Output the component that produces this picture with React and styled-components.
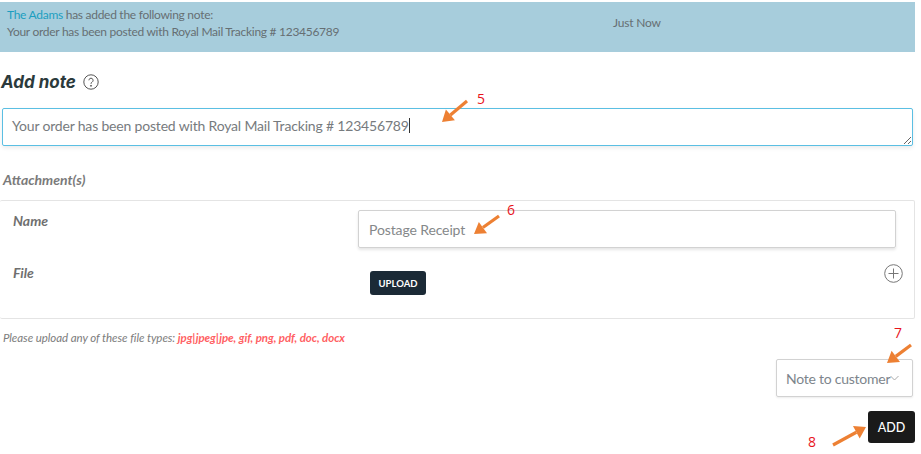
import React from "react";
import styled, { createGlobalStyle } from "styled-components";

const Global = createGlobalStyle`
  html, body { margin: 0; padding: 0; background: #fff; }
  body { font-family: Lato, "Liberation Sans", sans-serif; color: #6b6f72; }
`;

const Page = styled.div`
  position: relative;
  width: 921px;
  height: 454px;
  overflow: hidden;
  padding-top: 2px;
  box-sizing: border-box;
`;

const Banner = styled.div`
  width: 915px;
  height: 50px;
  box-sizing: border-box;
  background: #a7cddc;
  padding: 4px 7px 0;
  display: grid;
  grid-template-columns: 606px 1fr;
  font-size: 12px;
  line-height: 17px;
  letter-spacing: -0.28px;
  color: #666f73;
`;

const BannerLink = styled.span`
  color: #1c9ec0;
`;

const BannerTime = styled.div`
  padding-top: 8px;
  letter-spacing: -0.2px;
`;

const TitleRow = styled.div`
  display: flex;
  align-items: center;
  gap: 7px;
  margin-top: 20px;
  height: 20px;
  padding-left: 1px;
`;

const Title = styled.h2`
  margin: 0;
  font-family: Inter, "Open Sans", sans-serif;
  font-size: 17px;
  font-weight: 700;
  font-style: italic;
  color: #2b3a3c;
`;

const NoteWrap = styled.div`
  position: relative;
  margin: 16px 0 0 2px;
  width: 911px;
  height: 38px;
`;

const NoteArea = styled.textarea`
  display: block;
  width: 100%;
  height: 100%;
  box-sizing: border-box;
  margin: 0;
  padding: 7px 9px;
  border: 1px solid #5bbfe3;
  border-radius: 2px;
  outline: none;
  box-shadow: 0 2px 4px rgba(0, 0, 0, 0.08);
  font-family: Lato, "Liberation Sans", sans-serif;
  font-size: 14px;
  letter-spacing: -0.18px;
  line-height: 20px;
  color: #777b7e;
  resize: vertical;
`;

const Caret = styled.span`
  position: absolute;
  left: 407px;
  top: 10px;
  width: 1px;
  height: 15px;
  background: #333;
`;

const AttachLabel = styled.div`
  margin: 25px 0 0 3px;
  height: 17px;
  font-size: 14px;
  line-height: 17px;
  font-weight: 700;
  font-style: italic;
  color: #7a7a7a;
`;

const Card = styled.div`
  margin-top: 12px;
  width: 915px;
  height: 119px;
  box-sizing: border-box;
  border: 1px solid #e4e4e4;
  border-left: none;
  border-radius: 2px;
  display: grid;
  grid-template-columns: 358px 538px 1fr;
  grid-template-rows: 47px 1fr;
  padding-top: 9px;
`;

const FieldLabel = styled.div`
  padding: ${(p) => p.$top}px 0 0 13px;
  font-size: 14px;
  line-height: 17px;
  font-weight: 700;
  font-style: italic;
  color: #6f6f6f;
`;

const TextBox = styled.div`
  height: 38px;
  box-sizing: border-box;
  border: 1px solid #d2d2d2;
  border-radius: 2px;
  box-shadow: 0 2px 3px rgba(0, 0, 0, 0.1);
  padding: 0 10px;
  display: flex;
  align-items: center;
  font-size: 14px;
  letter-spacing: -0.12px;
  color: #85888a;
`;

const UploadCell = styled.div`
  padding: 14px 0 0 12px;
`;

const UploadButton = styled.button`
  display: block;
  width: 56px;
  height: 24px;
  padding: 1px 0 0;
  border: none;
  border-radius: 3px;
  background: #1b2a36;
  color: #fff;
  font-family: Lato, "Liberation Sans", sans-serif;
  font-size: 9.5px;
  font-weight: 700;
`;

const PlusCell = styled.div`
  padding: 7px 0 0 0;
  margin-left: -12px;
  color: #777;
`;

const HelpText = styled.div`
  margin: 12px 0 0 3px;
  height: 14px;
  font-size: 11.5px;
  letter-spacing: -0.06px;
  line-height: 14px;
  font-style: italic;
  color: #7c7c7c;
`;

const FileTypes = styled.span`
  color: #ff5f63;
  font-weight: 700;
`;

const Actions = styled.div`
  width: 913px;
  display: flex;
  flex-direction: column;
  align-items: flex-end;
`;

const SelectBox = styled.div`
  margin-top: 14px;
  width: 137px;
  height: 38px;
  box-sizing: border-box;
  border: 1px solid #d2d2d2;
  border-radius: 2px;
  box-shadow: 0 1px 2px rgba(0, 0, 0, 0.08);
  padding: 0 13px 0 9px;
  display: flex;
  align-items: center;
  justify-content: space-between;
  font-size: 14px;
  letter-spacing: -0.25px;
  color: #7d858c;
  white-space: nowrap;

  svg {
    flex-shrink: 0;
  }
`;

const AddButton = styled.button`
  margin: 14px -2px 0 0;
  width: 47px;
  height: 32px;
  border: none;
  border-radius: 3px;
  background: #1a1a1a;
  color: #fff;
  padding: 0;
  font-family: Lato, "Liberation Sans", sans-serif;
  font-size: 12.5px;
  font-weight: 500;
`;

const Callout = styled.span`
  position: absolute;
  left: ${(p) => p.$x}px;
  top: ${(p) => p.$y}px;
  font-family: "Open Sans", sans-serif;
  font-size: 14px;
  line-height: 16px;
  color: #e8141c;
`;

const ArrowLayer = styled.svg`
  position: absolute;
  left: 0;
  top: 0;
  pointer-events: none;
`;

const arrows = [
  [467, 101, 442, 122],
  [499, 216, 474, 234],
  [911, 345, 887, 363],
  [833, 445, 866, 427],
];

function Arrow({ from, to }) {
  const [x1, y1] = from;
  const [x2, y2] = to;
  const len = Math.hypot(x2 - x1, y2 - y1);
  const ux = (x2 - x1) / len;
  const uy = (y2 - y1) / len;
  const bx = x2 - ux * 11;
  const by = y2 - uy * 11;
  const head = `${x2},${y2} ${bx - uy * 7},${by + ux * 7} ${bx + uy * 7},${by - ux * 7}`;
  return (
    <g>
      <line x1={x1} y1={y1} x2={bx} y2={by} stroke="#ed8033" strokeWidth="3.2" />
      <polygon points={head} fill="#ed8033" />
    </g>
  );
}

export default function App() {
  return (
    <Page>
      <Global />
      <Banner>
        <div>
          <BannerLink>The Adams</BannerLink> has added the following note:
          <br />
          Your order has been posted with Royal Mail Tracking # 123456789
        </div>
        <BannerTime>Just Now</BannerTime>
      </Banner>

      <TitleRow>
        <Title>Add note</Title>
        <svg width="16" height="16" viewBox="0 0 16 16" fill="none" stroke="#555" strokeWidth="1">
          <circle cx="8" cy="8" r="7.2" />
          <path d="M5.9 6.3a2.1 2.1 0 1 1 3.2 1.8c-.7.4-1.1.8-1.1 1.7" />
          <circle cx="8" cy="11.8" r="0.5" fill="#555" />
        </svg>
      </TitleRow>

      <NoteWrap>
        <NoteArea readOnly defaultValue="Your order has been posted with Royal Mail Tracking # 123456789" />
        <Caret />
      </NoteWrap>

      <AttachLabel>Attachment(s)</AttachLabel>

      <Card>
        <FieldLabel $top={2}>Name</FieldLabel>
        <TextBox>Postage Receipt</TextBox>
        <div />
        <FieldLabel $top={7}>File</FieldLabel>
        <UploadCell>
          <UploadButton>UPLOAD</UploadButton>
        </UploadCell>
        <PlusCell>
          <svg width="19" height="19" viewBox="0 0 19 19" fill="none" stroke="currentColor" strokeWidth="1">
            <circle cx="9.5" cy="9.5" r="8.8" />
            <path d="M9.5 4.5v10M4.5 9.5h10" />
          </svg>
        </PlusCell>
      </Card>

      <HelpText>
        Please upload any of these file types: <FileTypes>jpg|jpeg|jpe, gif, png, pdf, doc, docx</FileTypes>
      </HelpText>

      <Actions>
        <SelectBox>
          Note to customer
          <svg width="9" height="6" viewBox="0 0 9 6" fill="none" stroke="#aaa" strokeWidth="1">
            <path d="M.5 1l4 4 4-4" />
          </svg>
        </SelectBox>
        <AddButton>ADD</AddButton>
      </Actions>

      <ArrowLayer width="921" height="454">
        {arrows.map(([x1, y1, x2, y2]) => (
          <Arrow key={x1} from={[x1, y1]} to={[x2, y2]} />
        ))}
      </ArrowLayer>
      <Callout $x={477} $y={91}>5</Callout>
      <Callout $x={507} $y={202}>6</Callout>
      <Callout $x={894} $y={325}>7</Callout>
      <Callout $x={808} $y={434}>8</Callout>
    </Page>
  );
}
